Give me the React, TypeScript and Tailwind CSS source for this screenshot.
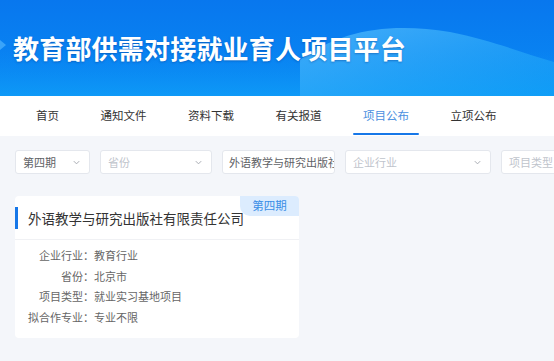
import React from "react";

const navItems = ["首页", "通知文件", "资料下载", "有关报道", "项目公布", "立项公布"];

function Chevron() {
  return (
    <svg width="9" height="9" viewBox="0 0 10 10" className="shrink-0">
      <path d="M2 3.5 L5 6.5 L8 3.5" fill="none" stroke="#a8abb2" strokeWidth="1.1" />
    </svg>
  );
}

function Select({ text, placeholder, w }: { text: string; placeholder?: boolean; w: string }) {
  return (
    <div
      className={`${w} h-[24px] shrink-0 bg-white border border-[#e4e7ed] rounded-[3px] flex items-center justify-between pl-[7px] pr-[8px]`}
    >
      <span className={`text-[11px] ${placeholder ? "text-[#c0c4cc]" : "text-[#606266]"}`}>{text}</span>
      <Chevron />
    </div>
  );
}

export default function App() {
  const details: [string, string][] = [
    ["企业行业：", "教育行业"],
    ["省份：", "北京市"],
    ["项目类型：", "就业实习基地项目"],
    ["拟合作专业：", "专业不限"],
  ];

  return (
    <div
      className="w-[554px] h-[361px] overflow-hidden bg-[#f4f6fa]"
      style={{ fontFamily: '"Noto Sans CJK SC", "Noto Sans", sans-serif' }}
    >
      {/* banner */}
      <div className="relative h-[96px] overflow-hidden bg-gradient-to-b from-[#0877ee] to-[#0b8af4]">
        <svg className="absolute inset-0" width="554" height="96" viewBox="0 0 554 96" preserveAspectRatio="none">
          <defs>
            <linearGradient id="wv" x1="0" y1="0" x2="1" y2="1">
              <stop offset="0" stopColor="#4fb6fb" stopOpacity="0.85" />
              <stop offset="1" stopColor="#11a2f7" stopOpacity="0.5" />
            </linearGradient>
            <linearGradient id="bt" x1="0" y1="0" x2="0" y2="1">
              <stop offset="0" stopColor="#0b8cf5" stopOpacity="0" />
              <stop offset="1" stopColor="#0fa0f8" stopOpacity="0.7" />
            </linearGradient>
          </defs>
          <rect x="0" y="50" width="554" height="46" fill="url(#bt)" />
          <path d="M300 60 C 340 30, 390 22, 450 32 C 490 40, 520 52, 554 62 L554 96 L300 96 Z" fill="url(#wv)" />
          <path d="M0 40 L6 45 L0 50 Z" fill="#5cbcff" opacity="0.6" />
        </svg>
        <div className="relative h-full flex items-center pl-[13px] pb-[2px]">
          <h1 className="text-[26px] font-bold text-white tracking-[0.2px] [text-shadow:0_1px_2px_rgba(0,40,120,0.35)]">
            教育部供需对接就业育人项目平台
          </h1>
        </div>
      </div>

      {/* nav */}
      <div className="h-[40px] bg-white flex items-stretch pl-[26px] gap-[21.5px]">
        {navItems.map((n) => {
          const active = n === "项目公布";
          return (
            <div
              key={n}
              className={`relative flex items-center px-[10px] text-[11.5px] ${active ? "text-[#4a8fe0]" : "text-[#333]"}`}
            >
              {n}
              {active && <div className="absolute left-0 right-0 bottom-[1px] h-[2px] bg-[#1677e8] rounded" />}
            </div>
          );
        })}
      </div>

      {/* filters */}
      <div className="flex items-center gap-[10px] pl-[15px] pt-[14px]">
        <Select text="第四期" w="w-[75px]" />
        <Select text="省份" placeholder w="w-[112px]" />
        <div className="w-[113px] h-[24px] shrink-0 bg-white border border-[#e4e7ed] rounded-[3px] flex items-center px-[6px] overflow-hidden">
          <span className="text-[11px] text-[#606266] whitespace-nowrap">外语教学与研究出版社</span>
        </div>
        <Select text="企业行业" placeholder w="w-[146px]" />
        <div className="w-[80px] h-[24px] shrink-0 bg-white border border-[#e4e7ed] rounded-[3px] flex items-center px-[7px]">
          <span className="text-[11px] text-[#c0c4cc] whitespace-nowrap">项目类型</span>
        </div>
      </div>

      {/* card */}
      <div className="ml-[15px] mt-[22px] w-[284px] bg-white rounded-[4px] overflow-hidden">
        <div className="relative h-[44px] flex items-center border-b border-[#f0f1f4]">
          <div className="w-[3px] h-[22px] bg-[#1677e8] mt-[1px]" />
          <span className="ml-[10px] text-[13.5px] text-[#333] mt-[1px]">外语教学与研究出版社有限责任公司</span>
          <div className="absolute right-0 top-0 w-[59px] h-[20px] bg-[#dcecfe] rounded-bl-[10px] flex items-center justify-center text-[11.5px] text-[#3a8ee6]">
            第四期
          </div>
        </div>
        <div className="pt-[5px] pb-[10px] pl-[13px]">
          {details.map(([k, v]) => (
            <div key={k} className="flex items-center h-[20.7px] text-[11px] text-[#666]">
              <span className="w-[66px] text-right shrink-0">{k}</span>
              <span>{v}</span>
            </div>
          ))}
        </div>
      </div>
    </div>
  );
}
